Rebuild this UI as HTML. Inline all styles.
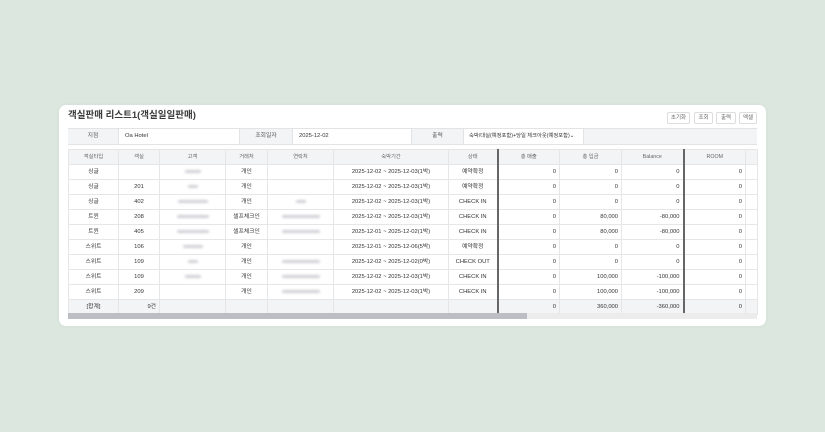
<!DOCTYPE html>
<html><head><meta charset="utf-8"><style>
*{margin:0;padding:0;box-sizing:border-box}
body{width:825px;height:432px;background:#dce8df;font-family:"Liberation Sans","Noto Sans CJK KR",sans-serif;position:relative;overflow:hidden;color:#333}
.card{position:absolute;left:59px;top:105px;width:707px;height:221px;background:#fff;border-radius:7px;box-shadow:0 0 4px rgba(0,0,0,.06)}
.title{position:absolute;left:68px;top:110px;font-size:9.5px;font-weight:bold;color:#3a3a3a;line-height:12px}
.btn{position:absolute;top:112px;height:12px;border:1px solid #ddd;border-radius:2px;font-size:5.5px;color:#666;display:flex;align-items:center;justify-content:center;background:#fff;line-height:1;padding-top:1px}
.f{position:absolute;top:128px;height:17px;border-top:1px solid #e3e3e3;border-bottom:1px solid #e3e3e3;font-size:5.8px;display:flex;align-items:center;line-height:1;padding-top:1px}
.lab{background:#f3f4f6;justify-content:center;color:#555}
.val{background:#fff;padding-left:6px;border-left:1px solid #e3e3e3;border-right:1px solid #e3e3e3}
table{position:absolute;left:68px;top:149px;border-collapse:collapse;font-size:5.8px;table-layout:fixed;line-height:1}
td,th{height:15px;border:1px solid #e6e6e6;text-align:center;vertical-align:middle;font-weight:normal;white-space:nowrap;overflow:hidden;line-height:1;padding-top:2px}
th{background:#f3f4f6;color:#666;font-size:5.3px}
.r{text-align:right;padding-right:3px}
.tk{border-left:2px solid #666}
tr.tot td{background:#f3f4f6}
.bl{display:inline-block;height:3px;background:#d0d0d6;filter:blur(1.3px);border-radius:2px;vertical-align:middle}
.sb{position:absolute;left:68px;top:313px;width:689px;height:6px;background:#ececec}
.th{position:absolute;left:68px;top:313px;width:459px;height:6px;background:#bdbdc4}
</style></head><body>
<div class="card"></div>
<div class="title">객실판매 리스트1(객실일일판매)</div>
<div class="btn" style="left:667px;width:23px">초기화</div>
<div class="btn" style="left:694px;width:19px">조회</div>
<div class="btn" style="left:716px;width:20px">출력</div>
<div class="btn" style="left:739px;width:18px">엑셀</div>
<div class="f lab" style="left:68px;width:50px">지점</div>
<div class="f val" style="left:118px;width:122px">Oa Hotel</div>
<div class="f lab" style="left:240px;width:52px">조회일자</div>
<div class="f val" style="left:292px;width:120px">2025-12-02</div>
<div class="f lab" style="left:412px;width:51px">출력</div>
<div class="f val" style="left:463px;width:121px;font-size:5.3px;padding-left:5px">숙박/대실(예정포함)+당일 체크아웃(예정포함)⌄</div>
<div class="f lab" style="left:584px;width:173px"></div>
<table>
<colgroup><col style="width:50px"><col style="width:41px"><col style="width:66px"><col style="width:42px"><col style="width:66px"><col style="width:115px"><col style="width:49px"><col style="width:62px"><col style="width:62px"><col style="width:62px"><col style="width:62px"><col style="width:12px"></colgroup>
<tr><th>객실타입</th><th>객실</th><th>고객</th><th>거래처</th><th>연락처</th><th>숙박기간</th><th>상태</th><th class="tk">총 매출</th><th>총 입금</th><th>Balance</th><th class="tk">ROOM</th><th></th></tr>
<tr><td>싱글</td><td></td><td><span class="bl" style="width:16px"></span></td><td>개인</td><td></td><td>2025-12-02 ~ 2025-12-03(1박)</td><td>예약확정</td><td class="r tk">0</td><td class="r">0</td><td class="r">0</td><td class="r tk">0</td><td></td></tr>
<tr><td>싱글</td><td>201</td><td><span class="bl" style="width:10px"></span></td><td>개인</td><td></td><td>2025-12-02 ~ 2025-12-03(1박)</td><td>예약확정</td><td class="r tk">0</td><td class="r">0</td><td class="r">0</td><td class="r tk">0</td><td></td></tr>
<tr><td>싱글</td><td>402</td><td><span class="bl" style="width:30px"></span></td><td>개인</td><td><span class="bl" style="width:10px"></span></td><td>2025-12-02 ~ 2025-12-03(1박)</td><td>CHECK IN</td><td class="r tk">0</td><td class="r">0</td><td class="r">0</td><td class="r tk">0</td><td></td></tr>
<tr><td>트윈</td><td>208</td><td><span class="bl" style="width:32px"></span></td><td>셀프체크인</td><td><span class="bl" style="width:38px"></span></td><td>2025-12-02 ~ 2025-12-03(1박)</td><td>CHECK IN</td><td class="r tk">0</td><td class="r">80,000</td><td class="r">-80,000</td><td class="r tk">0</td><td></td></tr>
<tr><td>트윈</td><td>405</td><td><span class="bl" style="width:32px"></span></td><td>셀프체크인</td><td><span class="bl" style="width:38px"></span></td><td>2025-12-01 ~ 2025-12-02(1박)</td><td>CHECK IN</td><td class="r tk">0</td><td class="r">80,000</td><td class="r">-80,000</td><td class="r tk">0</td><td></td></tr>
<tr><td>스위트</td><td>106</td><td><span class="bl" style="width:20px"></span></td><td>개인</td><td></td><td>2025-12-01 ~ 2025-12-06(5박)</td><td>예약확정</td><td class="r tk">0</td><td class="r">0</td><td class="r">0</td><td class="r tk">0</td><td></td></tr>
<tr><td>스위트</td><td>109</td><td><span class="bl" style="width:10px"></span></td><td>개인</td><td><span class="bl" style="width:38px"></span></td><td>2025-12-02 ~ 2025-12-02(0박)</td><td>CHECK OUT</td><td class="r tk">0</td><td class="r">0</td><td class="r">0</td><td class="r tk">0</td><td></td></tr>
<tr><td>스위트</td><td>109</td><td><span class="bl" style="width:16px"></span></td><td>개인</td><td><span class="bl" style="width:38px"></span></td><td>2025-12-02 ~ 2025-12-03(1박)</td><td>CHECK IN</td><td class="r tk">0</td><td class="r">100,000</td><td class="r">-100,000</td><td class="r tk">0</td><td></td></tr>
<tr><td>스위트</td><td>209</td><td></td><td>개인</td><td><span class="bl" style="width:38px"></span></td><td>2025-12-02 ~ 2025-12-03(1박)</td><td>CHECK IN</td><td class="r tk">0</td><td class="r">100,000</td><td class="r">-100,000</td><td class="r tk">0</td><td></td></tr>
<tr class="tot"><td>[합계]</td><td class="r">9건</td><td></td><td></td><td></td><td></td><td></td><td class="r tk">0</td><td class="r">360,000</td><td class="r">-360,000</td><td class="r tk">0</td><td></td></tr>
</table>
<div class="sb"></div><div class="th"></div>
</body></html>
